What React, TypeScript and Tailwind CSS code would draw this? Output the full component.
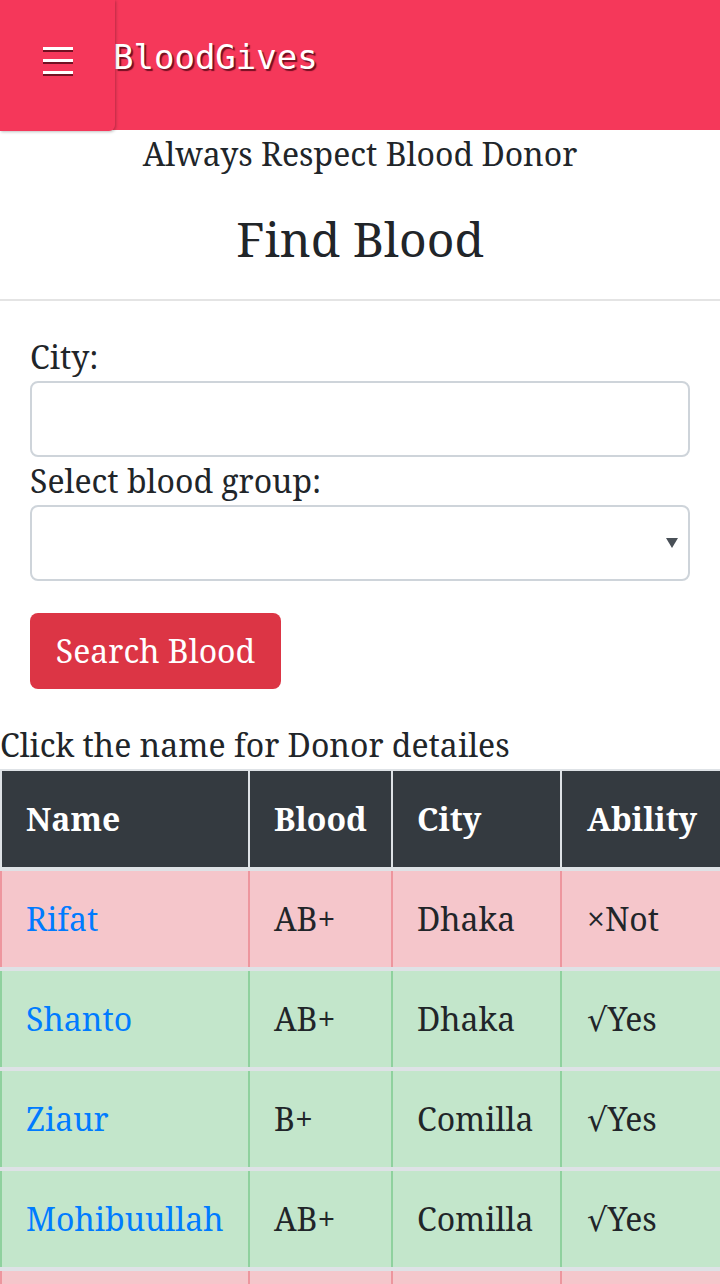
import React from "react";

type Row = { name: string; blood: string; city: string; ok: boolean };

const rows: Row[] = [
  { name: "Rifat", blood: "AB+", city: "Dhaka", ok: false },
  { name: "Shanto", blood: "AB+", city: "Dhaka", ok: true },
  { name: "Ziaur", blood: "B+", city: "Comilla", ok: true },
  { name: "Mohibuullah", blood: "AB+", city: "Comilla", ok: true },
  { name: "", blood: "", city: "", ok: false },
];

function Cells({
  values,
  border,
  bg,
  head,
  link,
}: {
  values: string[];
  border: string;
  bg: string;
  head?: boolean;
  link?: boolean;
}) {
  const widths = ["w-[248px]", "w-[143px]", "w-[169px]", "w-[162px]"];
  return (
    <div className={`flex h-[96px] shrink-0 ${bg}`}>
      {values.map((v, i) => (
        <div
          key={i}
          className={`${widths[i]} shrink-0 border-l-2 ${border} flex items-center ${
            i === 3 ? "pl-[25px]" : "pl-[24px]"
          }`}
        >
          <span
            className={
              head
                ? "font-bold text-white"
                : i === 0 && link
                ? "text-[#007bff]"
                : "text-[#212529]"
            }
          >
            {v}
          </span>
        </div>
      ))}
    </div>
  );
}

export default function App() {
  return (
    <div className="w-[720px] h-[1284px] overflow-hidden bg-white font-['Noto_Serif','DejaVu_Serif',serif] text-[32px] leading-[48px] text-[#212529]">
      {/* Header */}
      <div className="relative h-[130px] bg-[#f5385a] flex items-start">
        <div className="w-[115px] h-[131px] shrink-0 bg-[#f5375a] rounded-br-[6px] shadow-[1px_1px_3px_rgba(0,0,0,0.25)] flex flex-col items-center pt-[47px] gap-[9px] z-10">
          <div className="w-[30px] h-[3px] bg-white shadow-[0_2px_0_rgba(90,10,25,0.85)]" />
          <div className="w-[30px] h-[3px] bg-white shadow-[0_2px_0_rgba(90,10,25,0.85)]" />
          <div className="w-[30px] h-[3px] bg-white shadow-[0_2px_0_rgba(90,10,25,0.85)]" />
        </div>
        <div className="mt-[37px] -ml-[2px] font-['DejaVu_Sans_Mono',monospace] text-[34px] leading-[40px] text-white [text-shadow:2px_2px_1px_rgba(70,0,15,0.75)]">
          BloodGives
        </div>
      </div>

      <div className="text-center">Always Respect Blood Donor</div>
      <div className="text-center text-[48px] leading-[54px] mt-[34px]">Find Blood</div>
      <div className="mt-[33px] h-[2px] bg-[#e4e4e4]" />

      {/* Form */}
      <div className="px-[30px] pt-[32px]">
        <div>City:</div>
        <div className="h-[76px] border-2 border-[#ced4da] rounded-[8px] bg-white" />
        <div>Select blood group:</div>
        <div className="relative h-[76px] border-2 border-[#ced4da] rounded-[8px] bg-white flex items-center justify-end pr-[10px]">
          <svg width="12" height="10" viewBox="0 0 12 10">
            <polygon points="0,0 12,0 6,10" fill="#495057" />
          </svg>
        </div>
        <div className="mt-[32px] w-[251px] h-[76px] rounded-[8px] bg-[#dc3545] text-white flex items-center justify-center">
          Search Blood
        </div>
      </div>

      <div className="mt-[32px]">Click the name for Donor detailes</div>

      {/* Table */}
      <div className="border-t-2 border-[#dee2e6] w-[722px]">
        <Cells
          values={["Name", "Blood", "City", "Ability"]}
          border="border-[#dee2e6]"
          bg="bg-[#343a40]"
          head
        />
        {rows.map((r, i) => (
          <div key={i} className="border-t-4 border-[#dee2e6]">
            <Cells
              values={[r.name, r.blood, r.city, r.name ? (r.ok ? "√Yes" : "×Not") : ""]}
              border={r.ok ? "border-[#8fd19e]" : "border-[#ed969e]"}
              bg={r.ok ? "bg-[#c3e6cb]" : "bg-[#f5c6cb]"}
              link
            />
          </div>
        ))}
      </div>
    </div>
  );
}
